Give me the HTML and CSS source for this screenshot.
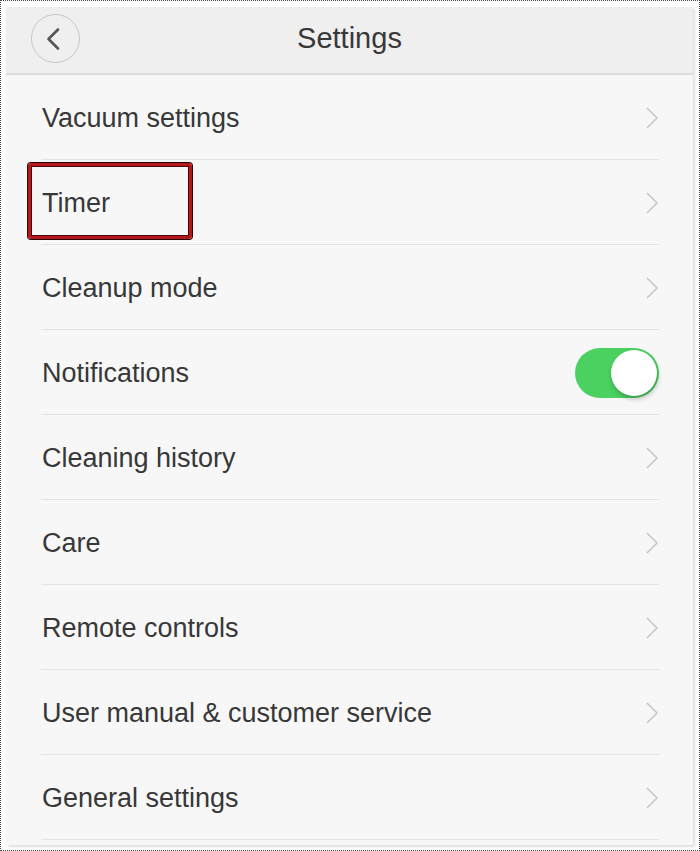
FILE: index.html
```html
<!DOCTYPE html>
<html lang="en">

<head>
    <meta charset="UTF-8">
    <title>Settings</title>
    <link rel="stylesheet" href="styles.css">
</head>

<body>
    <div class="frame">
        <div class="screen">
            <div class="header">
                <button class="back-btn">
                    <svg width="20" height="24" viewBox="0 0 20 24">
                        <polyline points="14,2.5 4.5,12 14,21.5" fill="none" stroke="#555" stroke-width="2.6" stroke-linecap="round" stroke-linejoin="round"/>
                    </svg>
                </button>
                <h1>Settings</h1>
            </div>

            <ul class="list">
                <li class="row">
                    <span>Vacuum settings</span>
                    <svg class="chevron" width="14" height="24" viewBox="0 0 14 24"><polyline points="2,2 12,12 2,22" /></svg>
                </li>
                <li class="row">
                    <span>Timer</span>
                    <div class="highlight"></div>
                    <svg class="chevron" width="14" height="24" viewBox="0 0 14 24"><polyline points="2,2 12,12 2,22" /></svg>
                </li>
                <li class="row">
                    <span>Cleanup mode</span>
                    <svg class="chevron" width="14" height="24" viewBox="0 0 14 24"><polyline points="2,2 12,12 2,22" /></svg>
                </li>
                <li class="row">
                    <span>Notifications</span>
                    <div class="toggle on"><div class="knob"></div></div>
                </li>
                <li class="row">
                    <span>Cleaning history</span>
                    <svg class="chevron" width="14" height="24" viewBox="0 0 14 24"><polyline points="2,2 12,12 2,22" /></svg>
                </li>
                <li class="row">
                    <span>Care</span>
                    <svg class="chevron" width="14" height="24" viewBox="0 0 14 24"><polyline points="2,2 12,12 2,22" /></svg>
                </li>
                <li class="row">
                    <span>Remote controls</span>
                    <svg class="chevron" width="14" height="24" viewBox="0 0 14 24"><polyline points="2,2 12,12 2,22" /></svg>
                </li>
                <li class="row">
                    <span>User manual &amp; customer service</span>
                    <svg class="chevron" width="14" height="24" viewBox="0 0 14 24"><polyline points="2,2 12,12 2,22" /></svg>
                </li>
                <li class="row">
                    <span>General settings</span>
                    <svg class="chevron" width="14" height="24" viewBox="0 0 14 24"><polyline points="2,2 12,12 2,22" /></svg>
                </li>
            </ul>
        </div>
    </div>
</body>

</html>
```

FILE: styles.css
```css
html, body {
    margin: 0;
    padding: 0;
    background-color: #ffffff;
}

body {
    font-family: 'Liberation Sans', Arial, sans-serif;
    color: #333;
}

.frame {
    width: 700px;
    height: 851px;
    box-sizing: border-box;
    border: 1px dotted #444;
    padding: 6px 5px 5px 5px;
}

.screen {
    width: 687px;
    height: 838px;
    background-color: #f7f7f7;
    box-shadow: 2px 2px 2px rgba(0, 0, 0, 0.12);
    overflow: hidden;
}

.header {
    height: 68px;
    box-sizing: border-box;
    padding-bottom: 4px;
    background-color: #efefef;
    border-bottom: 2px solid #dcdcdc;
    display: flex;
    align-items: center;
    justify-content: center;
    position: relative;
}

.header h1 {
    margin: 0;
    font-size: 29px;
    font-weight: normal;
    color: #383838;
}

.back-btn {
    position: absolute;
    left: 25px;
    top: 7px;
    width: 49px;
    height: 49px;
    border-radius: 50%;
    border: 1px solid #c6c6c6;
    background: transparent;
    display: flex;
    align-items: center;
    justify-content: center;
    padding: 0 4px 0 0;
}

.list {
    list-style: none;
    margin: 0 34px 0 35px;
    padding: 0;
}

.row {
    height: 85px;
    box-sizing: border-box;
    padding-top: 2px;
    padding-left: 1px;
    border-bottom: 1px solid #e3e3e3;
    display: flex;
    align-items: center;
    justify-content: space-between;
    font-size: 27px;
    color: #383838;
    position: relative;
}

.chevron polyline {
    fill: none;
    stroke: #c8c8c8;
    stroke-width: 1.6;
}

.toggle {
    width: 84px;
    height: 50px;
    border-radius: 25px;
    background-color: #4ad160;
    display: flex;
    align-items: center;
    justify-content: flex-end;
    padding: 0 2px;
    box-sizing: border-box;
}

.knob {
    width: 46px;
    height: 46px;
    border-radius: 50%;
    background-color: #fff;
    box-shadow: 1px 3px 5px rgba(0, 0, 0, 0.25);
}

.highlight {
    position: absolute;
    left: -13px;
    top: 3px;
    width: 158px;
    height: 70px;
    border: 3px solid #b5181c;
    border-radius: 3px;
    box-shadow: 0 0 0 1px #2a0505, inset 0 0 0 1px #4a0808;
}
```
